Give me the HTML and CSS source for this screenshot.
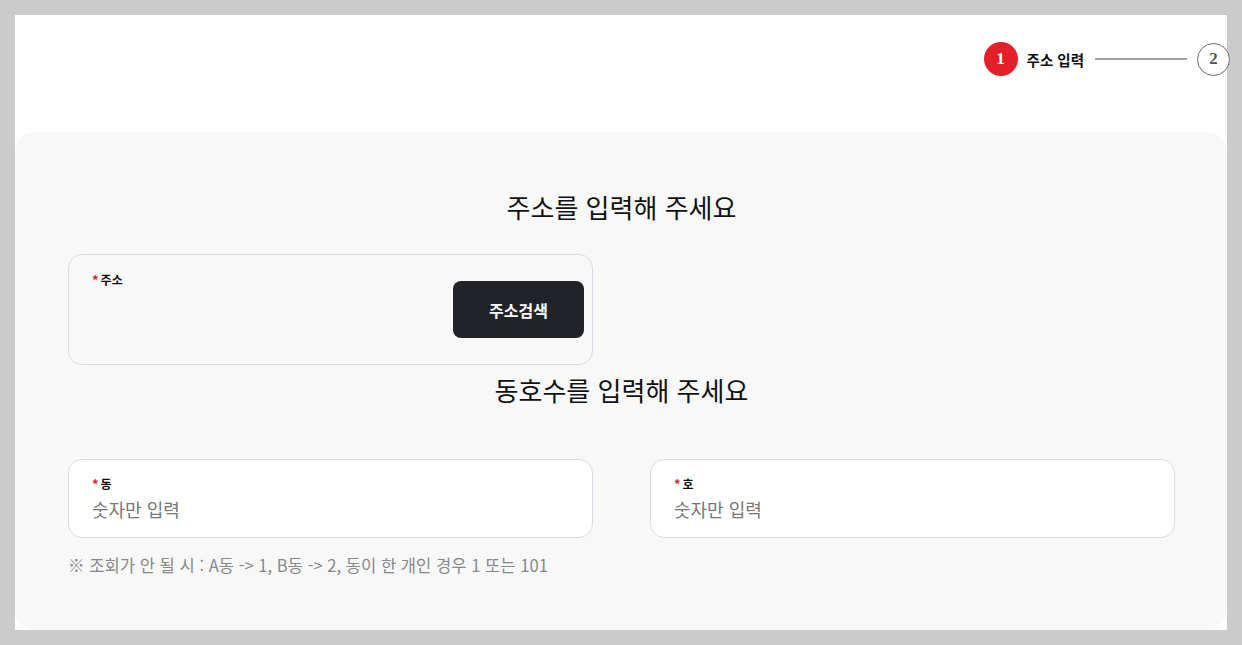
FILE: index.html
```html
<!DOCTYPE html>
<html lang="ko">
<head>
<meta charset="utf-8">
<link rel="stylesheet" href="styles.css">
</head>
<body>
<div class="page">
  <header class="header">
    <div class="stepper">
      <span class="step step-active">1</span>
      <span class="step-label">주소 입력</span>
      <span class="step-line"></span>
      <span class="step step-next">2</span>
    </div>
  </header>
  <main class="card">
    <h2 class="title">주소를 입력해 주세요</h2>
    <div class="grid">
      <div class="field field-address">
        <div class="label"><span class="req">*</span>주소</div>
        <button class="search-btn">주소검색</button>
      </div>
    </div>
    <h2 class="title title-second">동호수를 입력해 주세요</h2>
    <div class="grid">
      <div class="field field-input">
        <div class="label"><span class="req">*</span>동</div>
        <div class="placeholder">숫자만 입력</div>
      </div>
      <div class="field field-input">
        <div class="label"><span class="req">*</span>호</div>
        <div class="placeholder">숫자만 입력</div>
      </div>
    </div>
    <p class="note">※ 조회가 안 될 시 : A동 -&gt; 1, B동 -&gt; 2, 동이 한 개인 경우 1 또는 101</p>
  </main>
</div>
</body>
</html>
```

FILE: styles.css
```css
* { box-sizing: border-box; }
html, body { margin: 0; padding: 0; }
body {
  background: #cbcbcb;
  padding: 15px;
  font-family: "Noto Sans CJK KR", "Noto Sans", sans-serif;
  color: #222;
  width: 1242px;
  height: 645px;
  overflow: hidden;
}
.page {
  width: 1212px;
  height: 615px;
  background: #fff;
  display: flex;
  flex-direction: column;
}
.header {
  height: 117px;
  display: flex;
  justify-content: flex-end;
  padding-top: 27px;
}
.stepper {
  display: flex;
  align-items: center;
  height: 34px;
  margin-right: -3px;
}
.step {
  display: flex;
  align-items: center;
  justify-content: center;
  width: 34px;
  height: 34px;
  border-radius: 50%;
  font-family: "Liberation Serif", serif;
  font-weight: bold;
  font-size: 17px;
}
.step-active {
  background: #e51f2a;
  color: #fff;
}
.step-next {
  width: 33px;
  height: 33px;
  background: #fff;
  border: 1px solid #6b6b6b;
  color: #555;
}
.step-label {
  margin-left: 9px;
  font-size: 14.5px;
  font-weight: bold;
  color: #111;
}
.step-line {
  width: 92px;
  height: 2px;
  background: #9ca1ab;
  margin: 0 10px 0 11px;
}
.card {
  flex: 1;
  background: #f8f8f9;
  border-radius: 20px;
  padding: 24px 52px 0 53px;
}
.title {
  margin: 0;
  text-align: center;
  font-size: 26px;
  font-weight: 400;
  line-height: 50px;
  color: #111;
  margin-top: 26px;
}
.title-second {
  margin-top: 0;
  margin-bottom: 44px;
}
.grid {
  display: grid;
  grid-template-columns: 525px 525px;
  column-gap: 57px;
}
.field {
  border: 1px solid #d9dbe6;
  border-radius: 14px;
}
.field-address {
  margin-top: 22px;
  height: 111px;
  display: flex;
  justify-content: space-between;
  align-items: flex-start;
  padding: 17px 8px 0 23px;
  background: #f8f8f9;
}
.label {
  font-size: 12px;
  font-weight: bold;
  line-height: 16px;
  color: #111;
  display: flex;
  align-items: flex-start;
}
.req {
  color: #e5202a;
  margin-right: 2px;
  font-size: 13px;
}
.search-btn {
  margin-top: 9px;
  width: 131px;
  height: 57px;
  border: none;
  border-radius: 8px;
  background: #222328;
  color: #fff;
  font-family: inherit;
  font-size: 16px;
  font-weight: bold;
}
.field-input {
  height: 79px;
  background: #fff;
  padding: 16px 22px 0 23px;
}
.placeholder {
  margin-top: 4px;
  font-size: 18px;
  line-height: 26px;
  color: #777;
}
.note {
  margin: 17px 0 0 0;
  font-size: 16.6px;
  line-height: 20px;
  color: #888;
}
```
